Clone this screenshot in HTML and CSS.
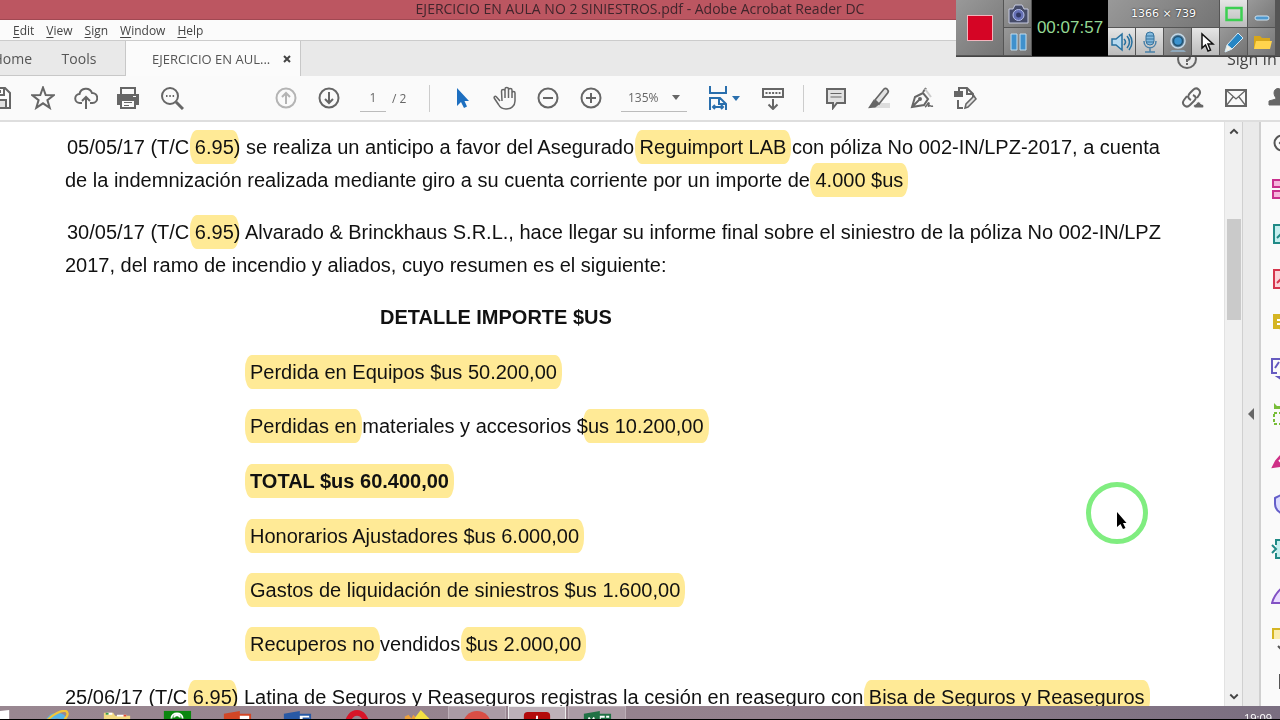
FILE: index.html
```html
<!DOCTYPE html>
<html lang="es">
<head>
<meta charset="utf-8">
<title>EJERCICIO EN AULA NO 2 SINIESTROS.pdf - Adobe Acrobat Reader DC</title>
<link rel="stylesheet" href="styles.css">
</head>
<body>
<div class="app">
  <header class="titlebar">EJERCICIO EN AULA NO 2 SINIESTROS.pdf - Adobe Acrobat Reader DC</header>

  <nav class="menubar">
    <button><u>E</u>dit</button>
    <button><u>V</u>iew</button>
    <button><u>S</u>ign</button>
    <button><u>W</u>indow</button>
    <button><u>H</u>elp</button>
  </nav>

  <div class="tabs">
    <button class="tab home">Home</button>
    <button class="tab tools">Tools</button>
    <div class="tab active"><span>EJERCICIO EN AUL...</span>
      <button class="close" aria-label="Close"><svg width="8" height="8" viewBox="0 0 8 8"><path d="M1 1l6 6M7 1L1 7" stroke="#444" stroke-width="2"/></svg></button>
    </div>
    <button class="help" aria-label="Help"><svg width="22" height="22" viewBox="0 0 22 22" fill="none" stroke="#666" stroke-width="2"><circle cx="11" cy="11" r="9"/><path d="M8 8.500a3 3 0 1 1 3 3.500v2M11 15v2"/></svg></button>
    <button class="signin">Sign In</button>
  </div>

  <div class="toolbar">
    <button class="tb first" aria-label="Save"><svg viewBox="0 0 24 24"><path d="M2 2h15l5 5v15H2zM7 2v7h9V2M12 4v3"/><path class="soft" d="M6 14h12v8H6z"/></svg></button>
    <button class="tb" aria-label="Star"><svg viewBox="0 0 24 24"><path d="M12 1.500l2.700 7.500 8 .2-6.300 4.900 2.300 7.700L12 17.300l-6.700 4.500 2.300-7.700L1.300 9.200l8-.2z"/></svg></button>
    <button class="tb" aria-label="Upload"><svg viewBox="0 0 24 24"><path d="M8 17H6a4.500 4.500 0 0 1-.5-9 6.500 6.500 0 0 1 12.500-1 5 5 0 0 1 .5 10H16M12 23V11M8 15l4-4 4 4"/></svg></button>
    <button class="tb" aria-label="Print"><svg viewBox="0 0 24 24"><path d="M4 8V2h14v6"/><path class="fill" d="M1 9h20v9H1z"/><path d="M4 14h14v8H4z" fill="#fafafa"/><path d="M7 16.500h8M7 19.500h5" stroke-width="1"/><path d="M16 10.500h3" stroke="#fafafa" stroke-width="1"/></svg></button>
    <button class="tb" aria-label="Search"><svg viewBox="0 0 24 24"><circle cx="10" cy="10" r="8"/><path d="M16 16l7 7" stroke-width="3"/><path d="M6 10h1.500M9.300 10h1.500M12.600 10h1.500"/></svg></button>
    <div class="pager">
      <button class="tb dim" aria-label="Previous page"><svg viewBox="0 0 24 24"><circle cx="12" cy="12" r="9.500"/><path d="M12 18V7M8 11l4-4 4 4"/></svg></button>
      <button class="tb" aria-label="Next page"><svg viewBox="0 0 24 24"><circle cx="12" cy="12" r="9.500"/><path d="M12 6v11M8 13l4 4 4-4"/></svg></button>
      <label class="page"><input type="text" value="1" aria-label="Page"><span>/ 2</span></label>
    </div>
    <div class="group">
      <button class="tb" aria-label="Select"><svg viewBox="0 0 24 24"><path d="M7 2v18l4-4 3 6 3-1.500-2.500-5.500H19z" fill="#1d6fc0" stroke="none"/></svg></button>
      <button class="tb" aria-label="Hand"><svg viewBox="0 0 24 24" class="thin"><path d="M7 15L3.500 11C2 9.500.5 11 1.500 12.500l4 6C7 21.500 9 23 13 23c5 0 9-3 9-8V7c0-2-3-2-3 0v5V4c0-2-3.500-2-3.500 0v8V3c0-2-3.500-2-3.500 0v9V5c0-2-3.500-2-3.500 0l.5 10"/></svg></button>
      <button class="tb" aria-label="Zoom out"><svg viewBox="0 0 24 24"><circle cx="12" cy="12" r="9.500"/><path d="M7 12h10"/></svg></button>
      <button class="tb" aria-label="Zoom in"><svg viewBox="0 0 24 24"><circle cx="12" cy="12" r="9.500"/><path d="M7 12h10M12 7v10"/></svg></button>
      <label class="zoom"><select aria-label="Zoom"><option>135%</option></select><svg class="caret" viewBox="0 0 8 5"><path d="M0 0h8L4 5z"/></svg></label>
      <button class="tb fit" aria-label="Fit width"><svg viewBox="0 0 24 24"><path d="M4 0v7h16V0M4 24V12h10l6 6v6M13 12v6h7M7 21h10M9 19l-2 2 2 2M15 19l2 2-2 2"/></svg><svg class="caret" viewBox="0 0 8 5"><path d="M0 0h8L4 5z"/></svg></button>
      <button class="tb" aria-label="Keyboard"><svg viewBox="0 0 24 24"><path d="M2 3h20v8H2z"/><path d="M4.500 7h15" stroke-dasharray="2 1.300"/><path d="M12 13v10M7.500 18.500L12 23l4.500-4.500"/></svg></button>
    </div>
    <div class="group">
      <button class="tb" aria-label="Comment"><svg viewBox="0 0 24 24"><path class="soft" d="M3 3h18v14h-8l-4 5v-5H3z"/><path d="M6.500 7.500h11M6.500 11h11" stroke-width="1"/></svg></button>
      <button class="tb" aria-label="Highlight"><svg viewBox="0 0 24 24"><path d="M9 17h14v5H6z" fill="#ddd" stroke="none"/><path class="soft" d="M8 14L17 3c2-2 5 1 4 3.500L12 18z" stroke-width="1.700"/><path class="fill" d="M7 15l4 3-3 2.500-5 .5z"/></svg></button>
      <button class="tb" aria-label="Sign"><svg viewBox="0 0 24 24"><path d="M2 21L5 11l8-4 5 6-4 6zM2 21l7-7"/><path d="M13 6l3-4" /><path d="M15 3l6 8" stroke="#ccc"/><circle class="fill" cx="10" cy="13" r="1"/><path d="M15 21c2-1 3-5 4-4s-2 4 0 3 1 1 4 0" stroke-width="1.500"/></svg></button>
      <button class="tb" aria-label="Edit document"><svg viewBox="0 0 24 24"><path d="M6 6V2h8l6 6v3M14 2v6h6M5 14v8h5"/><path class="fill" d="M2 6h7v4H2z"/><path class="soft" d="M12 22l1-4 8-8 2 3-8 8z" stroke-width="1.500"/></svg></button>
    </div>
    <div class="right">
      <button class="tb" aria-label="Share link"><svg viewBox="0 0 24 24"><path d="M10 14c-4-2-3-5-1-7l3-3c4-4 9 1 6 5l-2 3M12 9c4 2 3 4 1 6l-4 4c-4 4-9-1-6-5l3-4"/><path class="fill" d="M14 22h8c2-2 0-4-2-4-1-3-4-3-5 0-3 0-3 3-1 4z" stroke="#fafafa" stroke-width="1"/></svg></button>
      <button class="tb" aria-label="Mail"><svg viewBox="0 0 24 24"><path d="M2 4h20v16H2z"/><path d="M2 4l10 9L22 4M2 20l7-9M22 20l-7-9" stroke-width="1.300"/></svg></button>
      <button class="tb" aria-label="Account"><svg viewBox="0 0 24 24"><path class="fill" d="M7 7c0-6 8-6 8 0 0 3-2 4-2 6l6 2v4H2v-4l7-2c0-2-2-3-2-6z" stroke-width="1"/></svg></button>
    </div>
  </div>

  <div class="workspace">
    <main class="document">
      <p><span class="line inset">05/05/17 (T/C <mark>6.95</mark>) se realiza un anticipo a favor del Asegurado <mark>Reguimport LAB</mark> con póliza No 002-IN/LPZ-2017, a cuenta</span>
      <span class="line">de la indemnización realizada mediante giro a su cuenta corriente por un importe de <mark>4.000 $us</mark></span></p>
      <p><span class="line inset">30/05/17 (T/C <mark>6.95</mark>) Alvarado &amp; Brinckhaus S.R.L., hace llegar su informe final sobre el siniestro de la póliza No 002-IN/LPZ</span>
      <span class="line">2017, del ramo de incendio y aliados, cuyo resumen es el siguiente:</span></p>
      <h1>DETALLE IMPORTE $US</h1>
      <ul>
        <li><mark>Perdida en Equipos $us 50.200,00</mark></li>
        <li><mark>Perdidas en</mark> materiales y accesorios $<mark>us 10.200,00</mark></li>
        <li class="total"><mark>TOTAL $us 60.400,00</mark></li>
        <li><mark>Honorarios Ajustadores $us 6.000,00</mark></li>
        <li><mark>Gastos de liquidación de siniestros $us 1.600,00</mark></li>
        <li><mark>Recuperos no</mark> vendidos <mark>$us 2.000,00</mark></li>
      </ul>
      <p><span class="line">25/06/17 (T/C <mark>6.95</mark>) Latina de Seguros y Reaseguros registras la cesión en reaseguro con <mark>Bisa de Seguros y Reaseguros</mark></span></p>
      <svg class="pointer" viewBox="0 0 62 62"><circle cx="31" cy="31" r="28.500" fill="none" stroke="#80ed80" stroke-width="5"/><path d="M31 30v15l3.500-3 2.500 5 2.500-1-2.500-5h3.500z" fill="#000"/></svg>
    </main>
    <div class="scrollbar">
      <svg viewBox="0 0 8 6"><path d="M1 5l3-3 3 3"/></svg>
      <div class="thumb"></div>
      <svg viewBox="0 0 8 6"><path d="M1 1l3 3 3-3"/></svg>
    </div>
    <button class="expander" aria-label="Show tools"><svg width="6" height="12" viewBox="0 0 6 12"><path d="M6 0v12L0 6z" fill="#666"/></svg></button>
    <aside class="sidepanel">
      <div class="pin"><svg viewBox="0 0 24 24" stroke="#555"><circle cx="11" cy="12" r="7.500"/><path d="M13 8l-4 4 4 4"/></svg></div>
      <svg viewBox="0 0 24 24" stroke="#c9308e" fill="#f6b5dc"><path d="M2 3h20v7H2zM2 14h20v7H2z"/></svg>
      <svg viewBox="0 0 24 24" stroke="#208a86" fill="#c5efef"><path d="M3 3h18v18H3z"/><path d="M6 16l5-5"/></svg>
      <svg viewBox="0 0 24 24" stroke="#d5364d" fill="#fbd4da"><path d="M3 3h18v18H3z"/><path d="M6 16l5-5"/></svg>
      <svg viewBox="0 0 24 24" stroke="#d5b523" fill="#d5b523"><path d="M3 3h18v13h-8v6l-4-6H3z"/><path d="M6 8h8M6 12h8" stroke="#fff"/></svg>
      <svg viewBox="0 0 24 24" stroke="#665bc0"><path d="M6 16H1V2h18v14"/><path d="M4 11l4-6M7 20h5l-2 2z"/></svg>
      <svg viewBox="0 0 24 24" stroke="#78bd38"><path d="M3 1l3 3h6v3H3z" fill="#78bd38" stroke="none"/><path d="M3 11h16v11H3z" stroke-dasharray="3 2"/></svg>
      <svg viewBox="0 0 24 24" stroke="#cf3087" fill="#cf3087"><path d="M2 20l3-6 8-9 5 5-9 9z"/><path d="M8 13l3 3" stroke="#fff"/></svg>
      <svg viewBox="0 0 24 24" stroke="#645ec9" fill="#dcdcff"><path d="M4 6l8-4 8 4v6c0 4-3 8-8 10-5-2-8-6-8-10z"/></svg>
      <svg viewBox="0 0 24 24" stroke="#208a86" fill="#c5efef"><path d="M5 8V3h15v18H5v-5"/><path d="M1 8l4 4-4 4" fill="none"/></svg>
      <svg viewBox="0 0 24 24" stroke="#8251c4" fill="#eadcff"><path d="M1 21C3 14 7 9 12 5l6 6-7 10z"/></svg>
      <svg class="cut" viewBox="0 0 24 12" stroke="#d5b523" fill="#fbedb0"><path d="M2 13V2h20v11"/></svg>
      <svg class="more" viewBox="0 0 24 12" stroke="#555"><path d="M7 3l4 4 4-4"/></svg>
      <svg class="bottom" viewBox="0 0 24 24" stroke="#555"><path d="M9 4h12v13H9z"/></svg>
    </aside>
  </div>

  <footer class="taskbar">
    <button class="task start" aria-label="Start"><svg viewBox="0 0 32 32"><path d="M2 3l27-3v32H2z" fill="#fff"/></svg></button>
    <button class="task" aria-label="Internet Explorer"><svg viewBox="0 0 32 32"><circle cx="16" cy="16" r="10" fill="none" stroke="#55b5e9" stroke-width="6"/><path d="M3 16C7 5 26-3 27 3c1 2-1 5-3 7" fill="none" stroke="#f2c63a" stroke-width="2.500"/></svg></button>
    <button class="task" aria-label="Explorer"><svg viewBox="0 0 32 32"><path d="M2 3h10l2 3h16v20H2z" fill="#f2da83"/><path d="M5 4h6M16 6h10" stroke="#fff" stroke-width="2"/><path d="M4 4h3" stroke="#3a9b46" stroke-width="2"/><path d="M23 6h3" stroke="#e04d32" stroke-width="2"/></svg></button>
    <button class="task" aria-label="Store"><svg viewBox="0 0 32 32"><path d="M2 1h29v30H2z" fill="#0b870f"/><path d="M10 9c0-7 12-7 12 0M13 8c0-3 6-3 6 0" fill="none" stroke="#fff" stroke-width="2"/></svg></button>
    <button class="task" aria-label="PowerPoint"><svg viewBox="0 0 32 32"><path d="M16 5h14v23H16z" fill="#fff" stroke="#d24625" stroke-width="2"/><path d="M2 4l17-3v30L2 28z" fill="#d24625"/></svg></button>
    <button class="task" aria-label="Word"><svg viewBox="0 0 32 32"><path d="M16 5h14v23H16z" fill="#fff" stroke="#2859a5" stroke-width="2"/><path d="M2 4l17-3v30L2 28z" fill="#2859a5"/><path d="M22 9h7" stroke="#2859a5" stroke-width="2"/></svg></button>
    <button class="task" aria-label="Opera"><svg viewBox="0 0 32 32"><ellipse cx="16" cy="16" rx="10" ry="13" fill="none" stroke="#d71528" stroke-width="6"/></svg></button>
    <button class="task" aria-label="Media"><svg viewBox="0 0 32 32"><path d="M3 7l4-2 3 4 2-4 3 3v12H3z" fill="#eca13b"/><path d="M14 8l6-8 9 9v12H14z" fill="#f4e042"/></svg></button>
    <button class="task open" aria-label="Recorder"><svg viewBox="0 0 32 32"><circle cx="16" cy="16" r="15" fill="#d84e45"/></svg></button>
    <button class="task open current" aria-label="Acrobat"><svg viewBox="0 0 32 32"><rect x="2" y="2" width="28" height="28" rx="4" fill="#b30b0b"/><path d="M16 6v6M16 8c-1 8-5 11-8 12" stroke="#fff" stroke-width="2" fill="none"/></svg></button>
    <button class="task open" aria-label="Excel"><svg viewBox="0 0 32 32"><path d="M16 5h14v23H16z" fill="#fff" stroke="#207245" stroke-width="2"/><path d="M2 4l17-3v30L2 28z" fill="#207245"/><path d="M7 8l6 9M13 8l-6 9" stroke="#fff" stroke-width="2"/><path d="M20 9h10M25 5v20" stroke="#207245" stroke-width="1.500"/></svg></button>
    <time>19:09</time>
  </footer>

  <section class="recorder" aria-label="Screen recorder">
    <button class="rec" aria-label="Stop"><span></span></button>
    <button class="cam" aria-label="Screenshot"><svg viewBox="0 0 24 24"><path d="M3 7h4l2-4h7l2 4h4v14H3z" fill="#454b68" stroke="#c7cbe0"/><circle cx="12.500" cy="13" r="5.500" fill="#6570b5" stroke="#b6bfeb"/><circle cx="12.500" cy="13" r="2.500" fill="#313863"/></svg></button>
    <button class="pause" aria-label="Pause"><svg viewBox="0 0 24 24"><path d="M5 4h6v16H5zM14 4h6v16h-6z" fill="#3f91cd" stroke="#c1ddef"/></svg></button>
    <output class="timer">00:07:57</output>
    <div class="size">1366 × 739</div>
    <button class="lit" aria-label="Area"><svg viewBox="0 0 24 24"><path d="M4.500 6h15v12h-15z" fill="none" stroke="#3ccf52" stroke-width="2.500"/></svg></button>
    <button aria-label="Minimize"><svg viewBox="0 0 24 24"><rect x="5" y="14" width="14" height="4" rx="2" fill="#4f99cf" stroke="#cfe3f2"/></svg></button>
    <button class="lit" aria-label="Sound"><svg viewBox="0 0 24 24"><path d="M2 9h4l6-5v16l-6-5H2z" fill="#b8daf0" stroke="#27709f" stroke-width="1.500"/><path d="M14 9q3 3 0 6M17 6q5 6 0 12M19 4q6 8 0 16" fill="none" stroke="#27709f" stroke-width="1.500"/></svg></button>
    <button class="lit" aria-label="Microphone"><svg viewBox="0 0 24 24"><rect x="8" y="2" width="8" height="13" rx="4" fill="#82b9de" stroke="#37729c"/><path d="M8 6h8M8 9h8M8 12h8" stroke="#37729c"/><path d="M6 11c0 9 12 9 12 0M12 18v4M7 22h10" fill="none" stroke="#4a81a8" stroke-width="1.500"/></svg></button>
    <button aria-label="Webcam"><svg viewBox="0 0 24 24"><circle cx="12" cy="11" r="7" fill="#5a7f9a" stroke="#c4d8e7" stroke-width="1.500"/><circle cx="12" cy="11" r="4.500" fill="#3b93cf" stroke="#205476" stroke-width="1.500"/><path d="M6 20h12l2 2H4z" fill="#8fa9bc"/></svg></button>
    <button class="lit" aria-label="Cursor"><svg viewBox="0 0 24 24"><path d="M8 4v14l3.500-3 2.500 6 2.500-1-2.500-6H19z" fill="#fff" stroke="#111" stroke-width="1.500"/></svg></button>
    <button aria-label="Draw"><svg viewBox="0 0 24 24"><path d="M5 15L16 3l5 5L10 19z" fill="#2686c4" stroke="#d3e9f5"/><path d="M5 15l5 4-7 3z" fill="#f3efe4" stroke="#d3e9f5"/></svg></button>
    <button aria-label="Folder"><svg viewBox="0 0 24 24"><path d="M4 6h6l2 2h8v11H4z" fill="#d7a61b"/><path d="M4 19l2-8h16l-2 8z" fill="#ffd44d"/></svg></button>
  </section>
</div>
</body>
</html>
```

FILE: styles.css
```css
* { box-sizing: border-box; }
body {
  margin: 0;
  font-family: "Open Sans", "Noto Sans", sans-serif;
  color: #444;
}
button {
  border: 0;
  padding: 0;
  background: none;
  color: inherit;
  font: inherit;
  flex: none;
}
svg { display: block; flex: none; }
.app {
  display: flex;
  flex-direction: column;
  height: 100vh;
  position: relative;
  overflow: hidden;
  background: #fff;
}

/* window chrome */
.titlebar {
  flex: none;
  height: 20px;
  line-height: 18px;
  background: #bc5661;
  border-bottom: 1px solid #a04852;
  text-align: center;
  font-size: 14px;
  color: #40252c;
  white-space: nowrap;
}
.menubar {
  flex: none;
  display: flex;
  align-items: center;
  gap: 12px;
  height: 21px;
  padding-left: 13px;
  background: #fbfbfb;
  border-bottom: 1px solid #ccc;
  font-size: 12px;
}
.menubar u { text-underline-offset: 2px; }
.tabs {
  flex: none;
  display: flex;
  height: 35px;
  background: #e9e9e9;
  font-size: 14px;
}
.tab {
  border-bottom: 1px solid #c8c8c8;
  color: #555;
}
.home {
  display: flex;
  align-items: center;
  justify-content: flex-end;
  width: 47px;
  padding-right: 15px;
}
.tools { width: 78px; padding-right: 14px; }
.tab.active {
  display: flex;
  align-items: center;
  gap: 13px;
  width: 176px;
  padding-left: 26px;
  border: 1px solid #c8c8c8;
  border-width: 0 1px;
  background: #fbfbfb;
  font-size: 13px;
  white-space: nowrap;
}
.tab.active span { flex: none; }
.tabs .help {
  margin-left: auto;
  padding-right: 29px;
}
.tabs .signin {
  width: 53px;
  font-size: 16px;
  white-space: nowrap;
  text-align: left;
}

/* toolbar */
.toolbar {
  flex: none;
  display: flex;
  align-items: center;
  height: 46px;
  background: #fafafa;
  border-bottom: 2px solid #dedede;
  overflow: hidden;
}
.tb {
  display: flex;
  align-items: center;
  justify-content: center;
  width: 43px;
  height: 44px;
}
.tb svg {
  width: 24px;
  height: 24px;
  fill: none;
  stroke: #666;
  stroke-width: 2;
}
.tb.first { margin-left: -22px; }
.tb.dim svg { stroke: #b4b4b4; }
.tb svg .fill { fill: #666; }
.tb svg .soft { fill: #e2e2e2; }
.tb svg.thin { stroke-width: 1.5; }
.tb.fit { width: 55px; padding-right: 2px; }
.tb.fit svg { stroke: #2a6fad; }
.tb .caret, .caret {
  width: 8px;
  height: 5px;
  fill: #666;
  stroke: none;
}
.tb.fit .caret { stroke: none; fill: #2a6fad; margin-left: 2px; }
.pager, .group, .page, .right { display: flex; align-items: center; }
.pager { margin-left: 71px; }
.group { margin-left: 19px; }
.group::before {
  content: "";
  width: 1px;
  height: 27px;
  margin-right: 10px;
  background: #ccc;
}
.group + .group { margin-left: 9px; }
.page { margin-left: 10px; gap: 6px; font-size: 12px; color: #666; }
.page input {
  width: 26px;
  height: 28px;
  padding: 0;
  border: 0;
  border-bottom: 1px solid #bbb;
  background: none;
  text-align: center;
  font: inherit;
  color: inherit;
}
.page span { width: 18px; white-space: nowrap; }
.zoom {
  display: flex;
  align-items: center;
  width: 66px;
  height: 28px;
  margin: 0 9px;
  padding: 0 7px;
  border-bottom: 1px solid #bbb;
}
.zoom select {
  appearance: none;
  flex: 1;
  min-width: 0;
  padding: 0;
  border: 0;
  background: none;
  font: inherit;
  font-size: 12px;
  color: #666;
}
.right { margin-left: auto; margin-right: -20px; }

/* document */
.workspace {
  flex: 1;
  min-height: 0;
  display: flex;
}
.document {
  flex: 1;
  min-width: 0;
  position: relative;
  overflow: hidden;
  padding: 9px 0 0 65px;
  background: #fff;
  color: #111;
  font: 20px/33px "Liberation Sans", Arial, sans-serif;
}
.document p { margin: 0 0 19px; }
.line { display: block; white-space: nowrap; }
.line.inset { padding-left: 2px; }
.document h1 {
  margin: 0 0 22px 315px;
  font: inherit;
  font-weight: bold;
}
.document ul {
  display: grid;
  gap: 21px;
  margin: 0 0 20px;
  padding: 0 0 0 185px;
  list-style: none;
}
.total { margin: 1px 0; font-weight: bold; }
mark {
  padding: 6px 5px;
  margin: 0 -5px;
  border-radius: 7px / 14px;
  background: #ffea96;
  color: inherit;
  mix-blend-mode: multiply;
}
.pointer {
  position: absolute;
  right: 76px;
  top: 360px;
  width: 62px;
  height: 62px;
}

/* right-hand columns */
.scrollbar {
  flex: none;
  display: flex;
  flex-direction: column;
  align-items: center;
  width: 18px;
  padding: 5px 1px;
  background: #f0f0f0;
  border-left: 1px solid #e2e2e2;
}
.scrollbar svg {
  width: 10px;
  height: 8px;
  fill: none;
  stroke: #444;
  stroke-width: 1.5;
}
.thumb {
  width: 14px;
  height: 101px;
  margin: 84px 0 auto;
  background: #cacaca;
}
.expander {
  display: flex;
  align-items: center;
  justify-content: center;
  width: 19px;
  border: 1px solid #d0d0d0;
  border-width: 0 2px 0 1px;
  background: #eaeaea;
}
.sidepanel {
  flex: none;
  display: flex;
  flex-direction: column;
  width: 19px;
  padding-left: 10px;
  overflow: hidden;
  background: #fafafa;
}
.sidepanel svg {
  width: 24px;
  height: 24px;
  margin-bottom: 21px;
  stroke-width: 2;
}
.sidepanel svg:not([fill]) { fill: none; }
.sidepanel .pin {
  flex: none;
  height: 55px;
  padding-top: 9px;
}
.sidepanel .cut { height: 12px; margin: 0; }
.sidepanel .more { height: 12px; margin: 4px 0 8px; }
.sidepanel .bottom { margin: 8px 0 0; }

/* taskbar */
.taskbar {
  flex: none;
  display: flex;
  height: 14px;
  overflow: hidden;
  background: linear-gradient(90deg, #998791, #94818d 60%, #7a6e80);
  border-bottom: 1px solid #000;
}
.task {
  display: flex;
  justify-content: center;
  width: 58px;
  height: 40px;
  margin-right: 2px;
  padding-top: 4px;
}
.task.start { margin-left: -32px; }
.task svg { width: 30px; height: 30px; }
.task.open { background: #ab9ba5; border: 1px solid #bdb0b8; padding-top: 3px; }
.task.current { background: #bdb1b9; border-color: #eee; }
.taskbar time {
  margin: 4px 8px 0 auto;
  font-size: 11px;
  line-height: 16px;
  color: #fff;
}

/* floating recorder */
.recorder {
  position: absolute;
  top: 0;
  right: 0;
  display: grid;
  grid-template: 28px 28px / 48px 28px 76px repeat(6, 28px);
  width: 324px;
  overflow: hidden;
  border-bottom: 1px solid #444;
  background: #555;
}
.recorder button, .size {
  display: flex;
  align-items: center;
  justify-content: center;
  border: 1px solid #555;
  border-width: 0 1px 1px 0;
  background: linear-gradient(135deg, #999, #747474);
}
.recorder svg { width: 24px; height: 24px; }
.recorder .lit { background: linear-gradient(#e5e5e5, #bcbcbc); }
.recorder .rec { grid-row: span 2; }
.rec span {
  width: 26px;
  height: 26px;
  border: 1px solid #f4b4bd;
  background: #d50525;
}
.recorder .pause { grid-area: 2 / 2; }
.timer {
  grid-area: 1 / 3 / span 2;
  background: #000;
  color: #94d894;
  font: 17px/56px "Liberation Sans", Arial, sans-serif;
  text-align: center;
}
.size {
  grid-column: span 4;
  font: 11px "DejaVu Sans", sans-serif;
  color: #fff;
  text-shadow: 0 0 2px #000;
}
```
